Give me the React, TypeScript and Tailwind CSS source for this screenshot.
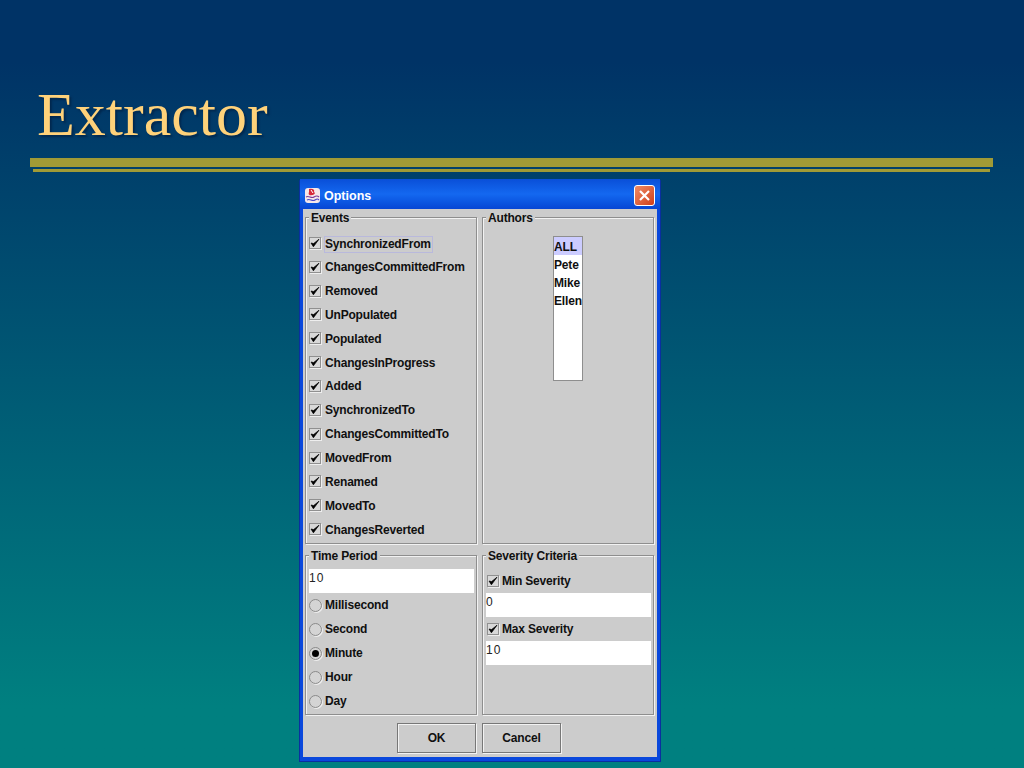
import type { ReactNode } from "react";

const events = [
  "SynchronizedFrom",
  "ChangesCommittedFrom",
  "Removed",
  "UnPopulated",
  "Populated",
  "ChangesInProgress",
  "Added",
  "SynchronizedTo",
  "ChangesCommittedTo",
  "MovedFrom",
  "Renamed",
  "MovedTo",
  "ChangesReverted",
];

const periods = ["Millisecond", "Second", "Minute", "Hour", "Day"];
const authors = ["Pete", "Mike", "Ellen"];

const Check = () => (
  <span className="flex h-[12px] w-[12px] shrink-0 items-center justify-center border border-[#909090] bg-[#d8d8d8] shadow-[1px_1px_0_#eee]">
    <svg width="10" height="10" viewBox="0 0 10 10">
      <path d="M1 5 L3.4 8.8 L9 1.2 L3.6 5.6 Z" fill="#000" stroke="#000" strokeWidth="0.7" />
    </svg>
  </span>
);

const Radio = ({ on }: { on: boolean }) => (
  <span className="flex h-[13px] w-[13px] shrink-0 items-center justify-center rounded-full border border-[#8a8a8a] bg-[#d4d4d4] shadow-[1px_1px_0_#eee]">
    {on && <span className="h-[7px] w-[7px] rounded-full bg-black" />}
  </span>
);

const Group = ({ title, className, children }: { title: string; className: string; children: ReactNode }) => (
  <fieldset className={`relative border border-[#8e8e8e] shadow-[inset_1px_1px_0_#f2f2f2,1px_1px_0_#f2f2f2] ${className}`}>
    <span className="absolute left-[3px] top-[-6px] bg-[#cccccc] px-[2px] text-[12px] leading-[13px] font-bold tracking-[-0.18px] text-[#101010]">
      {title}
    </span>
    {children}
  </fieldset>
);

const Field = ({ value }: { value: string }) => (
  <div className="flex h-[24px] items-start bg-white pt-[1px] text-[12px] leading-[16px] font-normal tracking-[1px] text-[#222]">
    {value}
  </div>
);

const Button = ({ label }: { label: string }) => (
  <button className="h-[30px] w-[79px] border border-[#777] bg-[#cccccc] text-center text-[12px] font-bold tracking-[-0.18px] text-[#101010] shadow-[inset_1px_1px_0_#f2f2f2,1px_1px_0_#f2f2f2]">
    {label}
  </button>
);

export default function App() {
  return (
    <div className="h-[768px] w-[1024px] overflow-hidden bg-gradient-to-b from-[#003366] from-[8%] to-[#008080] to-[92%] font-['Liberation_Sans',sans-serif]">
      <h1 className="ml-[37px] h-[158px] pt-[81px] font-['Liberation_Serif',serif] text-[62px] leading-[66px] font-normal text-[#ffd27a] [text-shadow:2px_2px_2px_#00284f]">
        Extractor
      </h1>
      <div className="ml-[30px] h-[9px] w-[963px] bg-[#a09a36]" />
      <div className="ml-[33px] mt-[2px] h-[3px] w-[957px] bg-[#a09a36]" />

      <div className="ml-[299px] mt-[7px] flex h-[583px] w-[362px] flex-col rounded-t-[3px] border-x border-b border-[#0a2f9f] bg-[#0a48dc] pb-[4px]">
        <div className="flex h-[30px] shrink-0 items-center justify-between bg-gradient-to-b from-[#0a4fd8] via-[#1468f0] to-[#0746d4] pl-[4px] pr-[5px] pt-[3px]">
          <div className="flex items-center gap-[3px]">
            <svg width="17" height="17" viewBox="0 0 17 17">
              <rect x="1" y="1" width="15" height="15" rx="3" fill="#f6e8ea" />
              <path d="M5 2 C9 1 11 3 10 5 C12 6 10 8 8 8 C5 9 4 7 5 5 Z" fill="#d62a3a" />
              <path d="M7 3 L9 6" stroke="#fff" strokeWidth="1" />
              <path d="M2 10 C5 8 7 12 10 10 S14 9 15 10" fill="none" stroke="#7a3c9a" strokeWidth="1.2" />
              <path d="M3 13 C6 11 8 15 11 13 S14 12 15 13" fill="none" stroke="#4a4ac8" strokeWidth="1.2" />
            </svg>
            <span className="mt-[1px] text-[12.5px] font-bold text-white">Options</span>
          </div>
          <div className="flex h-[21px] w-[21px] items-center justify-center rounded-[3px] border border-white bg-gradient-to-br from-[#ee8a64] to-[#cf3c14]">
            <svg width="13" height="13" viewBox="0 0 13 13">
              <path d="M2 2 L11 11 M11 2 L2 11" stroke="#fff" strokeWidth="2.2" />
            </svg>
          </div>
        </div>

        <div className="mx-[3px] flex min-h-0 flex-1 flex-col bg-[#cccccc] px-[2px] pt-[8px] text-[12px] font-bold tracking-[-0.18px] text-[#101010]">
          <div className="grid h-[327px] shrink-0 grid-cols-[172px_172px] gap-[5px]">
            <Group title="Events" className="pl-[3px] pt-[13px]">
              {events.map((name, i) => (
                <div key={name} className="flex h-[23.85px] items-center gap-[4px]">
                  <Check />
                  <span className={i === 0 ? "-ml-px mt-[2px] -mb-px border border-[#b9b9dc] pr-px leading-[15px]" : "mt-[2px] leading-[15px]"}>{name}</span>
                </div>
              ))}
            </Group>
            <Group title="Authors" className="flex justify-center pt-[18px]">
              <div className="h-[145px] w-[30px] border border-[#8e8e8e] bg-white leading-[20px]">
                <div className="h-[18px] bg-[#ccccff]">ALL</div>
                {authors.map((a) => (
                  <div key={a} className="h-[18px]">{a}</div>
                ))}
              </div>
            </Group>
          </div>

          <div className="mt-[11px] grid h-[160px] shrink-0 grid-cols-[172px_172px] gap-[5px]">
            <Group title="Time Period" className="pl-[3px] pr-[2px] pt-[13px]">
              <Field value="10" />
              {periods.map((p) => (
                <div key={p} className="flex h-[24px] items-center gap-[3px]">
                  <Radio on={p === "Minute"} />
                  <span>{p}</span>
                </div>
              ))}
            </Group>
            <Group title="Severity Criteria" className="pl-[3px] pr-[2px] pt-[13px]">
              <div className="flex h-[24px] items-center gap-[3px] pl-[1px]">
                <Check />
                <span>Min Severity</span>
              </div>
              <Field value="0" />
              <div className="flex h-[24px] items-center gap-[3px] pl-[1px]">
                <Check />
                <span>Max Severity</span>
              </div>
              <Field value="10" />
            </Group>
          </div>

          <div className="mt-[8px] flex justify-center gap-[6px] pr-[2px]">
            <Button label="OK" />
            <Button label="Cancel" />
          </div>
        </div>
      </div>
    </div>
  );
}
